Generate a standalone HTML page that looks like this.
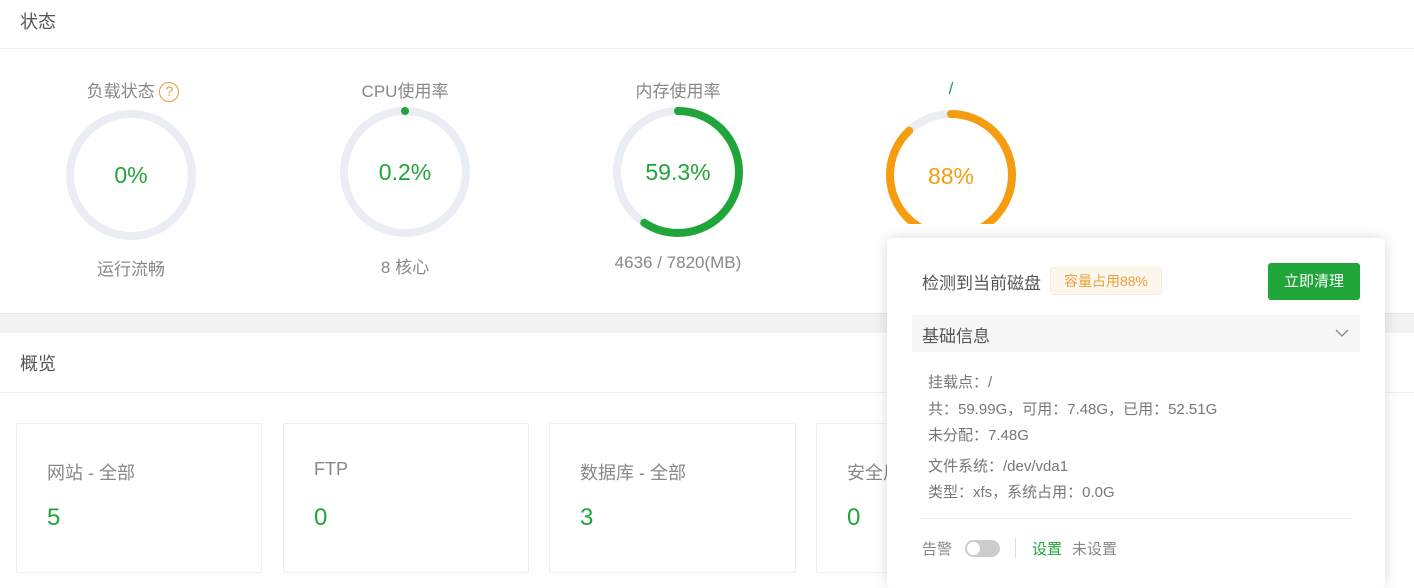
<!DOCTYPE html>
<html><head><meta charset="utf-8"><style>
*{margin:0;padding:0;box-sizing:border-box}
body{width:1414px;height:579px;overflow:hidden;background:#fff;font-family:"Liberation Sans","Noto Sans CJK SC",sans-serif;color:#666;position:relative}
.abs{position:absolute}
.h{font-size:18px;color:#555}
.lbl{font-size:17px;color:#888;text-align:center;width:200px}
.card{position:absolute;top:423px;height:150px;border:1px solid #eee;border-radius:2px}
.card .t{position:absolute;left:30px;top:35px;font-size:18px;color:#888}
.card .n{position:absolute;left:30px;top:80px;font-size:24px;color:#20a53a}
.pct{font-size:23px;text-align:center;width:200px}
</style></head><body>
<div class="abs h" style="left:20px;top:8px">状态</div>
<div class="abs" style="left:0;top:48px;width:1414px;height:1px;background:#eee"></div>

<div class="abs lbl" style="left:33px;top:77px">负载状态 <span style="display:inline-block;width:20px;height:20px;border:1.5px solid #e89c3a;border-radius:50%;color:#e89c3a;font-size:14px;line-height:17px;vertical-align:1px">?</span></div>
<div class="abs lbl" style="left:305px;top:77px">CPU使用率</div>
<div class="abs lbl" style="left:578px;top:77px">内存使用率</div>
<div class="abs lbl" style="left:851px;top:79px;color:#20a53a">/</div>

<svg class="abs" style="left:0;top:0" width="1414" height="300">
<g fill="none" stroke-width="8" stroke-linecap="round">
<circle cx="131" cy="175" r="61" stroke="#eaedf3"/>
<circle cx="405" cy="172" r="61" stroke="#eaedf3"/>
<circle cx="405" cy="111" r="4" fill="#20a53a" stroke="none"/>
<circle cx="678" cy="172" r="61" stroke="#eaedf3"/>
<circle cx="678" cy="172" r="61" stroke="#20a53a" stroke-dasharray="227.3 400" transform="rotate(-90 678 172)"/>
<circle cx="951" cy="175" r="61" stroke="#eaedf3"/>
<circle cx="951" cy="175" r="61" stroke="#f59d0f" stroke-dasharray="337 400" transform="rotate(-90 951 175)"/>
</g></svg>
<div class="abs pct" style="left:31px;top:162px;color:#20a53a">0%</div>
<div class="abs pct" style="left:305px;top:159px;color:#20a53a">0.2%</div>
<div class="abs pct" style="left:578px;top:159px;color:#20a53a">59.3%</div>
<div class="abs pct" style="left:851px;top:163px;color:#f59d0f">88%</div>

<div class="abs lbl" style="left:31px;top:255px">运行流畅</div>
<div class="abs lbl" style="left:305px;top:253px">8 核心</div>
<div class="abs lbl" style="left:578px;top:253px">4636 / 7820(MB)</div>

<div class="abs" style="left:0;top:313px;width:1414px;height:20px;background:#f2f2f2;border-top:1px solid #e6e6e6"></div>
<div class="abs h" style="left:20px;top:350px">概览</div>
<div class="abs" style="left:0;top:392px;width:1414px;height:1px;background:#eee"></div>

<div class="card" style="left:16px;width:246px"><div class="t">网站 - 全部</div><div class="n">5</div></div>
<div class="card" style="left:283px;width:246px"><div class="t">FTP</div><div class="n">0</div></div>
<div class="card" style="left:549px;width:247px"><div class="t">数据库 - 全部</div><div class="n">3</div></div>
<div class="card" style="left:816px;width:246px"><div class="t">安全风险</div><div class="n">0</div></div>

<div class="abs" style="left:876px;top:224px;width:520px;height:16px;background:#fff"></div>
<div class="abs" style="left:887px;top:238px;width:498px;height:350px;background:#fff;border-radius:4px;box-shadow:0 0 14px rgba(0,0,0,.14)">
 <div class="abs" style="left:35px;top:31px;font-size:17px;color:#555">检测到当前磁盘</div>
 <div class="abs" style="left:163px;top:29px;width:112px;height:28px;background:#fdf6ec;border:1px solid #faecd8;border-radius:3px;color:#e6a23c;font-size:14px;line-height:26px;text-align:center">容量占用88%</div>
 <div class="abs" style="left:381px;top:25px;width:92px;height:37px;background:#20a53a;border-radius:3px;color:#fff;font-size:15px;line-height:37px;text-align:center">立即清理</div>
 <div class="abs" style="left:25px;top:77px;width:448px;height:37px;background:#f7f7f7"></div>
 <div class="abs" style="left:35px;top:84px;font-size:17px;color:#555">基础信息</div>
 <svg class="abs" style="left:448px;top:90px" width="14" height="10"><path d="M1 2 L7 8 L13 2" fill="none" stroke="#888" stroke-width="1.3"/></svg>
 <div class="abs" style="left:41px;top:132px;font-size:15px;color:#777;line-height:26.5px">挂载点：/<br>共：59.99G，可用：7.48G，已用：52.51G<br>未分配：7.48G<br><div style="margin-top:4px">文件系统：/dev/vda1</div>类型：xfs，系统占用：0.0G</div>
 <div class="abs" style="left:33px;top:280px;width:432px;height:1px;background:#eee"></div>
 <div class="abs" style="left:35px;top:300px;font-size:15px;color:#888">告警</div>
 <div class="abs" style="left:78px;top:302px;width:35px;height:17px;border-radius:9px;background:#ccc"><div style="position:absolute;left:2px;top:2px;width:13px;height:13px;border-radius:50%;background:#fff"></div></div>
 <div class="abs" style="left:128px;top:300px;width:1px;height:20px;background:#ddd"></div>
 <div class="abs" style="left:145px;top:300px;font-size:15px;color:#20a53a">设置</div>
 <div class="abs" style="left:185px;top:300px;font-size:15px;color:#888">未设置</div>
</div>
</body></html>
